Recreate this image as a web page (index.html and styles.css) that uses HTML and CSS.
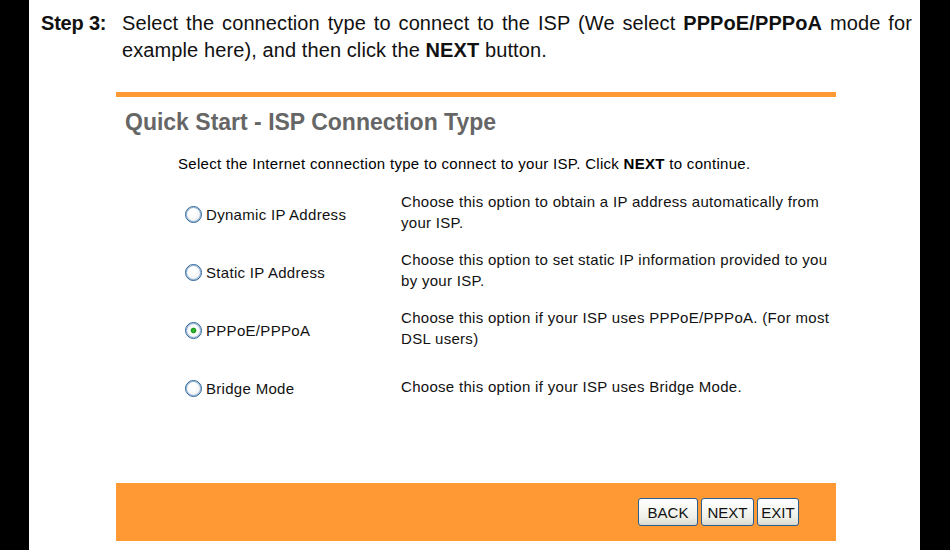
FILE: index.html
```html
<!DOCTYPE html>
<html lang="en">
<head>
    <meta charset="UTF-8">
    <meta name="viewport" content="width=device-width, initial-scale=1.0">
    <title>Quick Start - ISP Connection Type</title>
    <link rel="stylesheet" href="styles.css">
</head>
<body>
    <div class="sheet">
        <!-- Manual step text -->
        <div class="step">
            <span class="step-label">Step 3:</span>
            <p class="step-text">Select the connection type to connect to the ISP (We select <b>PPPoE/PPPoA</b> mode for example here), and then click the <b>NEXT</b> button.</p>
        </div>

        <!-- Router wizard panel -->
        <div class="panel">
            <h1>Quick Start - ISP Connection Type</h1>
            <p class="intro">Select the Internet connection type to connect to your ISP. Click <b>NEXT</b> to continue.</p>

            <div class="options">
                <label class="option"><input type="radio" name="isp">Dynamic IP Address</label>
                <div class="desc">Choose this option to obtain a IP address automatically from your ISP.</div>

                <label class="option"><input type="radio" name="isp">Static IP Address</label>
                <div class="desc">Choose this option to set static IP information provided to you by your ISP.</div>

                <label class="option"><input type="radio" name="isp" checked>PPPoE/PPPoA</label>
                <div class="desc">Choose this option if your ISP uses PPPoE/PPPoA. (For most DSL users)</div>

                <label class="option"><input type="radio" name="isp">Bridge Mode</label>
                <div class="desc">Choose this option if your ISP uses Bridge Mode.</div>
            </div>

            <div class="footer">
                <button class="btn-back">BACK</button>
                <button class="btn-next">NEXT</button>
                <button class="btn-exit">EXIT</button>
            </div>
        </div>
    </div>
</body>
</html>
```

FILE: styles.css
```css
body {
    margin: 0;
    background-color: #000;
    font-family: "Liberation Sans", Arial, sans-serif;
}
.sheet {
    margin-left: 29px;
    width: 891px;
    height: 550px;
    background-color: #fff;
    overflow: hidden;
}
.step {
    display: flex;
    padding: 10px 8px 0 12px;
    font-size: 20px;
    line-height: 27px;
    color: #111;
}
.step-label {
    flex: none;
    width: 81px;
    font-weight: bold;
    letter-spacing: -0.2px;
}
.step-text {
    margin: 0;
    text-align: justify;
    letter-spacing: 0.1px;
}
.panel {
    margin: 28px 0 0 87px;
    width: 720px;
    border-top: 5px solid #ff9933;
}
h1 {
    margin: 12px 0 0 9px;
    font-size: 23px;
    line-height: 26px;
    color: #666;
}
.intro {
    margin: 19px 0 0 62px;
    font-size: 15px;
    letter-spacing: 0.3px;
    line-height: 20px;
    color: #000;
}
.options {
    display: grid;
    grid-template-columns: 216px 1fr;
    grid-auto-rows: 58px;
    align-items: center;
    margin: 9px 0 0 69px;
    font-size: 15px;
    letter-spacing: 0.3px;
    color: #111;
}
.option {
    display: flex;
    align-items: center;
    gap: 4px;
    padding-top: 4px;
}
.desc {
    max-width: 430px;
    line-height: 21px;
}
input[type="radio"] {
    appearance: none;
    margin: 0;
    width: 17px;
    height: 17px;
    border: 1px solid #2a6399;
    border-radius: 50%;
    background: radial-gradient(circle at 40% 35%, #fff 30%, #dbe1e8 100%);
    box-shadow: inset 0 0 0 1px #9cb8d4;
}
input[type="radio"]:checked {
    background: radial-gradient(circle, #3cc03c 0, #1e9a1e 22%, #fff 31%, #dbe1e8 100%);
}
.footer {
    display: flex;
    justify-content: flex-end;
    align-items: center;
    gap: 3px;
    margin-top: 68px;
    height: 58px;
    padding-right: 37px;
    background-color: #ff9933;
}
button {
    height: 28px;
    padding: 0;
    font-family: inherit;
    font-size: 15px;
    color: #111;
    border: 1px solid #2b5f8f;
    border-radius: 3px;
    background: linear-gradient(#fff, #f0f0ea 70%, #d8d8d0);
    cursor: pointer;
}
.btn-back {
    width: 60px;
}
.btn-next {
    width: 53px;
}
.btn-exit {
    width: 42px;
}
```
